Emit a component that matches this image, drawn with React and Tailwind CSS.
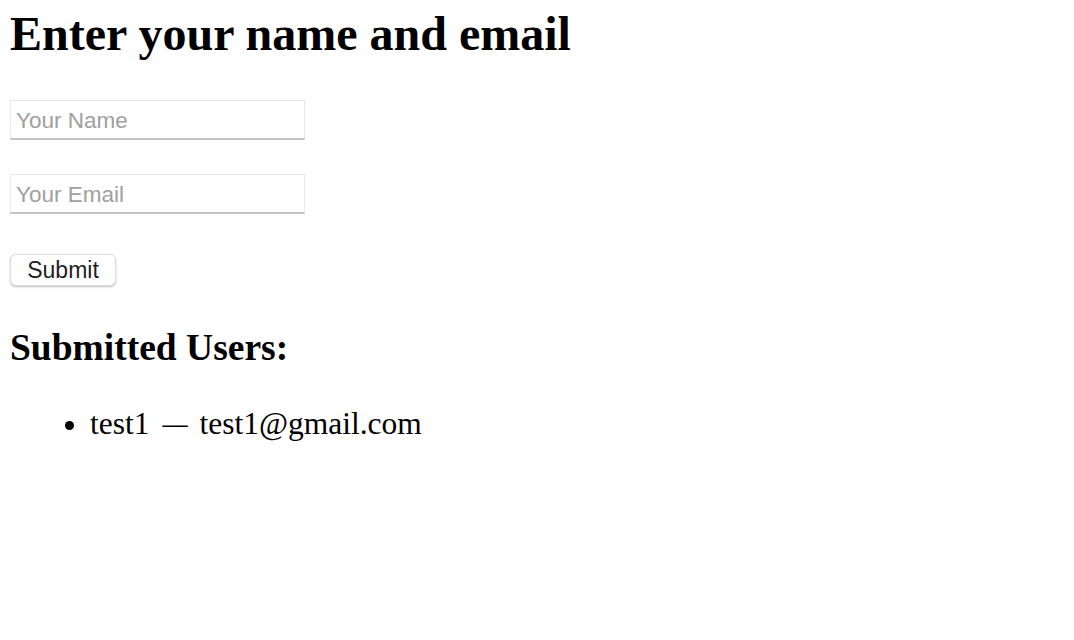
export default function App() {
  const users = [{ name: 'test1', email: 'test1@gmail.com' }];

  return (
    <div className="min-h-[640px] bg-white px-[10px] pt-[6px] text-black [font-family:'Liberation_Serif',serif]">
      <h1 className="text-[48px] font-bold leading-[56px]">Enter your name and email</h1>

      <form className="mt-[38px] flex flex-col items-start" onSubmit={(e) => e.preventDefault()}>
        <input
          type="text"
          placeholder="Your Name"
          className="h-[40px] w-[295px] border border-[#e6e6e6] border-b-[#c4c4c4] border-b-2 bg-white px-[5px] pt-[2px] text-[22.5px] [font-family:'Liberation_Sans',sans-serif] placeholder:text-[#a0a0a0] outline-none"
        />
        <input
          type="email"
          placeholder="Your Email"
          className="mt-[34px] h-[40px] w-[295px] border border-[#e6e6e6] border-b-[#c4c4c4] border-b-2 bg-white px-[5px] pt-[2px] text-[22.5px] [font-family:'Liberation_Sans',sans-serif] placeholder:text-[#a0a0a0] outline-none"
        />
        <button
          type="submit"
          className="mt-[40px] h-[32px] w-[106px] rounded-[6px] border border-[#dcdcdc] bg-white text-[23px] leading-none text-[#1f1f1f] shadow-[0_1px_2px_rgba(0,0,0,0.25)] [font-family:'Liberation_Sans',sans-serif]"
        >
          Submit
        </button>
      </form>

      <h2 className="mt-[40px] text-[37.5px] font-bold leading-[44px]">Submitted Users:</h2>
      <ul className="mt-[36px] list-disc pl-[80px] text-[31.5px] leading-[36px]">
        {users.map((u) => (
          <li key={u.email}>
            {u.name}
            <span className="inline-block w-[50px] scale-x-[0.8] text-center">—</span>
            {u.email}
          </li>
        ))}
      </ul>
    </div>
  );
}
